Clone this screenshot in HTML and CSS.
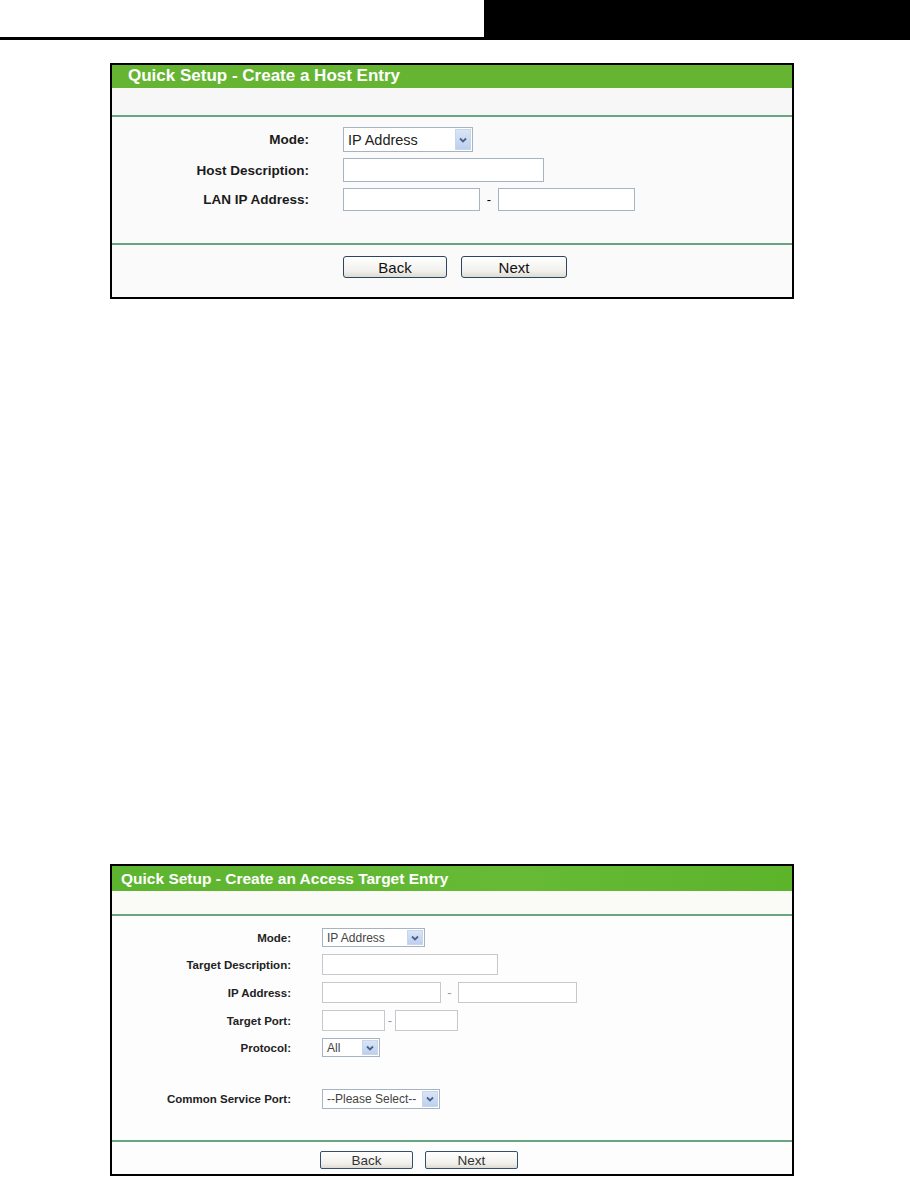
FILE: index.html
```html
<!DOCTYPE html>
<html lang="en">
<head>
    <meta charset="UTF-8">
    <title>Quick Setup</title>
    <link rel="stylesheet" href="styles.css">
</head>
<body>
    <div class="page-head">
        <div class="head-rule"></div>
        <div class="head-block"></div>
    </div>

    <div class="panel host-panel">
        <div class="panel-title">Quick Setup - Create a Host Entry</div>
        <div class="panel-sub"></div>
        <div class="panel-body">
            <div class="form-grid">
                <label>Mode:</label>
                <div class="select sel-mode"><span>IP Address</span><i class="arrow"><svg viewBox="0 0 10 10"><path d="M2 3.5 L5 6.5 L8 3.5" /></svg></i></div>

                <label>Host Description:</label>
                <div class="field fld-desc"></div>

                <label>LAN IP Address:</label>
                <div class="range"><div class="field fld-ip"></div><span class="dash">-</span><div class="field fld-ip"></div></div>
            </div>
        </div>
        <div class="panel-foot">
            <button class="btn btn-back">Back</button>
            <button class="btn btn-next">Next</button>
        </div>
    </div>

    <div class="panel target-panel">
        <div class="panel-title">Quick Setup - Create an Access Target Entry</div>
        <div class="panel-sub"></div>
        <div class="panel-body">
            <div class="form-grid">
                <label>Mode:</label>
                <div class="select sel-mode"><span>IP Address</span><i class="arrow"><svg viewBox="0 0 10 10"><path d="M2 3.5 L5 6.5 L8 3.5" /></svg></i></div>

                <label>Target Description:</label>
                <div class="field fld-desc"></div>

                <label>IP Address:</label>
                <div class="range"><div class="field fld-ip"></div><span class="dash">-</span><div class="field fld-ip"></div></div>

                <label>Target Port:</label>
                <div class="range port"><div class="field fld-port"></div><span class="dash">-</span><div class="field fld-port"></div></div>

                <label>Protocol:</label>
                <div class="select sel-proto"><span>All</span><i class="arrow"><svg viewBox="0 0 10 10"><path d="M2 3.5 L5 6.5 L8 3.5" /></svg></i></div>

                <label class="spaced">Common Service Port:</label>
                <div class="select sel-service spaced"><span>--Please Select--</span><i class="arrow"><svg viewBox="0 0 10 10"><path d="M2 3.5 L5 6.5 L8 3.5" /></svg></i></div>
            </div>
        </div>
        <div class="panel-foot">
            <button class="btn btn-back">Back</button>
            <button class="btn btn-next">Next</button>
        </div>
    </div>
</body>
</html>
```

FILE: styles.css
```css
body {
    margin: 0;
    background: #fff;
    font-family: "Liberation Sans", Arial, sans-serif;
    color: #000;
}

/* document header */
.page-head {
    display: flex;
    height: 40px;
}
.head-rule {
    width: 484px;
    border-bottom: 3px solid #000;
    box-sizing: border-box;
}
.head-block {
    flex: 1;
    background: #000;
}

/* panels */
.panel {
    width: 684px;
    margin-left: 110px;
    border: 2px solid #000;
    box-sizing: border-box;
    background: #fafafa;
}
.host-panel {
    margin-top: 23px;
}
.target-panel {
    margin-top: 565px;
    background: #fdfdfd;
}
.panel-title {
    height: 23px;
    line-height: 21px;
    background: #65b533;
    color: #fff;
    font-weight: bold;
    font-size: 17px;
    padding-left: 16px;
}
.panel-sub {
    height: 27px;
    background: #f7f7f7;
    border-bottom: 2px solid #67a583;
}
.panel-body {
    padding: 10px 0 32px;
    border-bottom: 2px solid #67a583;
}
.panel-foot {
    display: flex;
    justify-content: center;
    gap: 14px;
    padding: 11px 0 19px;
    padding-left: 6px;
}

/* form */
.form-grid {
    display: grid;
    grid-template-columns: 197px auto;
    column-gap: 34px;
    row-gap: 6px;
    align-items: center;
    justify-items: start;
}
.form-grid label {
    justify-self: end;
    font-weight: bold;
    font-size: 13.5px;
    color: #1a1a1a;
}
.field {
    height: 24px;
    background: #fff;
    border: 1px solid #a6b3c2;
    box-sizing: border-box;
}
.fld-desc {
    width: 201px;
}
.range {
    display: flex;
    align-items: center;
}
.fld-ip {
    width: 137px;
    height: 23px;
}
.dash {
    width: 18px;
    text-align: center;
    font-size: 13px;
}
.select {
    display: flex;
    align-items: center;
    justify-content: space-between;
    width: 130px;
    height: 25px;
    background: #fff;
    border: 1px solid #a6b3c2;
    box-sizing: border-box;
    padding: 1px 1px 1px 4px;
    font-size: 14.5px;
    color: #222;
}
.arrow {
    display: flex;
    align-items: center;
    justify-content: center;
    width: 16px;
    height: 100%;
    background: linear-gradient(#d9e5f7, #bcd0ee);
    border: 1px solid #c8d6ea;
    box-sizing: border-box;
}
.arrow svg {
    width: 10px;
    height: 10px;
    fill: none;
    stroke: #4d6185;
    stroke-width: 1.8;
}

.btn {
    font-family: "Liberation Sans", Arial, sans-serif;
    font-size: 15px;
    height: 22px;
    padding: 0;
    border: 1px solid #2c4560;
    border-radius: 3px;
    background: linear-gradient(#ffffff, #f1f0ec 70%, #dedbd2);
    color: #111;
}
.btn-back {
    width: 104px;
}
.btn-next {
    width: 106px;
}

/* second panel, smaller screenshot */
.target-panel .panel-title {
    height: 25px;
    line-height: 25px;
    font-size: 15.5px;
    padding-left: 9px;
    background: linear-gradient(90deg, #5db42e, #66ba35 60%, #5cb42b);
}
.target-panel .panel-sub {
    height: 23px;
    background: #fafbf6;
}
.target-panel .panel-body {
    padding: 12px 0 31px;
}
.target-panel .form-grid {
    grid-template-columns: 179px auto;
    column-gap: 31px;
    row-gap: 7px;
}
.target-panel .form-grid label {
    font-size: 11.5px;
    color: #222;
}
.target-panel .select {
    height: 19px;
    width: 103px;
    font-size: 12px;
    color: #444;
}
.target-panel .sel-proto {
    width: 58px;
}
.target-panel .sel-service {
    width: 118px;
    height: 20px;
}
.target-panel .spaced {
    margin-top: 25px;
}
.target-panel .field {
    height: 21px;
    border-color: #c5c9ce;
}
.target-panel .fld-desc {
    width: 176px;
}
.target-panel .fld-ip {
    width: 119px;
}
.target-panel .dash {
    width: 17px;
    color: #999;
}
.target-panel .fld-port {
    width: 63px;
}
.target-panel .port .dash {
    width: 10px;
}
.target-panel .panel-foot {
    gap: 12px;
    padding: 9px 0 5px;
    padding-left: 0;
    margin-left: -66px;
}
.target-panel .btn {
    height: 18px;
    font-size: 13.5px;
    border-color: #33506e;
    border-radius: 2px;
    width: 93px;
    color: #333;
}
```
